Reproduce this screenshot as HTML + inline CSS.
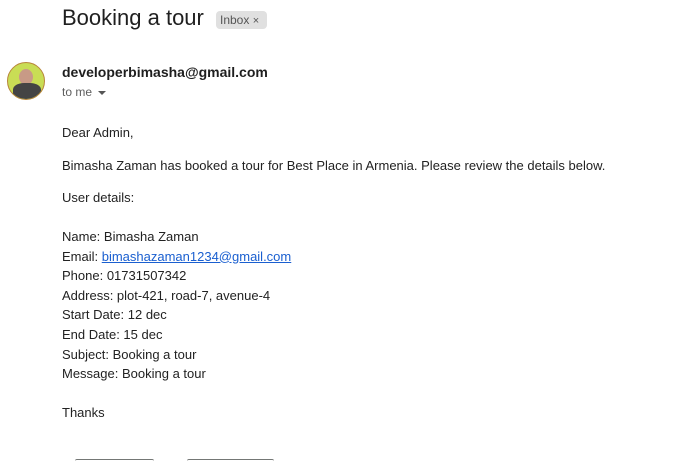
<!DOCTYPE html>
<html><head><style>
html,body{margin:0;width:673px;height:461px;overflow:hidden}
body{background:#fff;font-family:"Liberation Sans",Arial,sans-serif;color:#222;position:relative}
.a{position:absolute;white-space:nowrap}
.t{font-size:13px;color:#222}
.b{position:absolute;top:459px;height:2px;box-sizing:border-box;border-top:1px solid #747775;border-radius:8px 8px 0 0}
</style></head><body>
<div class="a" style="left:62px;top:5px;font-size:22px;color:#1f1f1f">Booking a tour</div>
<div class="a" style="left:216px;top:11px;width:51px;height:18px;background:#e0e0e0;border-radius:4px;font-size:12px;color:#555;line-height:18px;padding-left:4px;box-sizing:border-box">Inbox <span style="font-size:11px">×</span></div>
<div class="a" style="left:7px;top:62px;width:38px;height:38px;border-radius:50%;background:#c9dd55;border:1px solid #b8863a;box-sizing:border-box;overflow:hidden">
<div style="position:absolute;left:11px;top:6px;width:14px;height:16px;border-radius:50%;background:#c89a86"></div>
<div style="position:absolute;left:5px;top:20px;width:28px;height:16px;border-radius:40% 40% 0 0;background:#444"></div></div>
<div class="a" style="left:62px;top:64px;font-size:14px;font-weight:bold;color:#1f1f1f">developerbimasha@gmail.com</div>
<div class="a" style="left:62px;top:85px;font-size:12px;color:#5e5e5e">to me <span style="display:inline-block;border-left:4px solid transparent;border-right:4px solid transparent;border-top:4px solid #555;vertical-align:middle;margin-left:3px"></span></div>
<div class="a t" style="left:62px;top:125px">Dear Admin,</div>
<div class="a t" style="left:62px;top:158px">Bimasha Zaman has booked a tour for Best Place in Armenia. Please review the details below.</div>
<div class="a t" style="left:62px;top:190px">User details:</div>
<div class="a t" style="left:62px;top:227px;line-height:19.6px">Name: Bimasha Zaman<br>Email: <span style="color:#1a5fd0;text-decoration:underline">bimashazaman1234@gmail.com</span><br>Phone: 01731507342<br>Address: plot-421, road-7, avenue-4<br>Start Date: 12 dec<br>End Date: 15 dec<br>Subject: Booking a tour<br>Message: Booking a tour</div>
<div class="a t" style="left:62px;top:405px">Thanks</div>
<div class="b" style="left:75px;width:79px"></div>
<div class="b" style="left:187px;width:87px"></div>
</body></html>
